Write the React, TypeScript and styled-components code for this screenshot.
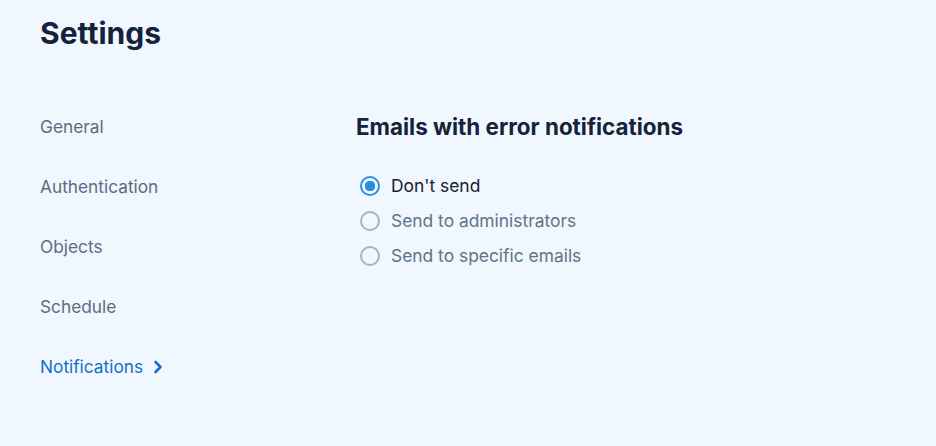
import React, { useState } from 'react';
import styled, { createGlobalStyle } from 'styled-components';

const GlobalStyle = createGlobalStyle`
  html, body {
    margin: 0;
    background: #f0f7ff;
    font-family: Inter, "Noto Sans", sans-serif;
  }
`;

const sections = ['General', 'Authentication', 'Objects', 'Schedule', 'Notifications'];

const options = [
  { label: "Don't send", value: 'none' },
  { label: 'Send to administrators', value: 'admins' },
  { label: 'Send to specific emails', value: 'emails' },
];

const App: React.FC = () => {
  const [active, setActive] = useState('Notifications');
  const [choice, setChoice] = useState('none');

  return (
    <>
      <GlobalStyle />
      <Page>
        <Title>Settings</Title>
        <Layout>
          <Nav>
            {sections.map((s) => (
              <NavItem key={s} $active={s === active} onClick={() => setActive(s)}>
                {s}
                {s === active && (
                  <svg width="12" height="14" viewBox="0 0 12 14" fill="none">
                    <path d="M3.5 2L8.5 7L3.5 12" stroke="currentColor" strokeWidth="2.6" strokeLinecap="round" strokeLinejoin="round" />
                  </svg>
                )}
              </NavItem>
            ))}
          </Nav>
          <Content>
            <Heading>Emails with error notifications</Heading>
            <RadioList>
              {options.map((o) => (
                <RadioRow key={o.value} onClick={() => setChoice(o.value)}>
                  <RadioCircle $checked={o.value === choice} />
                  <RadioLabel $checked={o.value === choice}>{o.label}</RadioLabel>
                </RadioRow>
              ))}
            </RadioList>
          </Content>
        </Layout>
      </Page>
    </>
  );
};

export default App;

const Page = styled.div`
  padding: 14px 40px 40px;
  min-height: 446px;
  box-sizing: border-box;
`;

const Title = styled.h1`
  margin: 0;
  font-size: 30px;
  font-weight: 700;
  color: #14233a;
  line-height: 38px;
`;

const Layout = styled.div`
  display: grid;
  grid-template-columns: 316px 1fr;
  margin-top: 64px;
`;

const Nav = styled.nav`
  display: flex;
  flex-direction: column;
  gap: 38px;
`;

const NavItem = styled.div<{ $active: boolean }>`
  display: flex;
  align-items: center;
  gap: 9px;
  font-size: 17.3px;
  line-height: 22px;
  color: ${(p) => (p.$active ? '#1470c4' : '#5c6c80')};
  cursor: pointer;
`;

const Content = styled.div`
  display: flex;
  flex-direction: column;
`;

const Heading = styled.h2`
  margin: 0;
  font-size: 22.4px;
  font-weight: 700;
  line-height: 22px;
  color: #14233a;
`;

const RadioList = styled.div`
  display: flex;
  flex-direction: column;
  gap: 11px;
  margin-top: 36px;
  padding-left: 4px;
`;

const RadioRow = styled.label`
  display: flex;
  align-items: center;
  gap: 11px;
  cursor: pointer;
`;

const RadioCircle = styled.span<{ $checked: boolean }>`
  width: 20px;
  height: 20px;
  box-sizing: border-box;
  border-radius: 50%;
  border: 2px solid ${(p) => (p.$checked ? '#2a8ee0' : '#a2b4c8')};
  background: ${(p) => (p.$checked ? 'radial-gradient(circle, #2a8ee0 0 5px, transparent 5.5px)' : 'transparent')};
  flex-shrink: 0;
`;

const RadioLabel = styled.span<{ $checked: boolean }>`
  font-size: 17.4px;
  line-height: 24px;
  color: ${(p) => (p.$checked ? '#18202c' : '#617387')};
`;
